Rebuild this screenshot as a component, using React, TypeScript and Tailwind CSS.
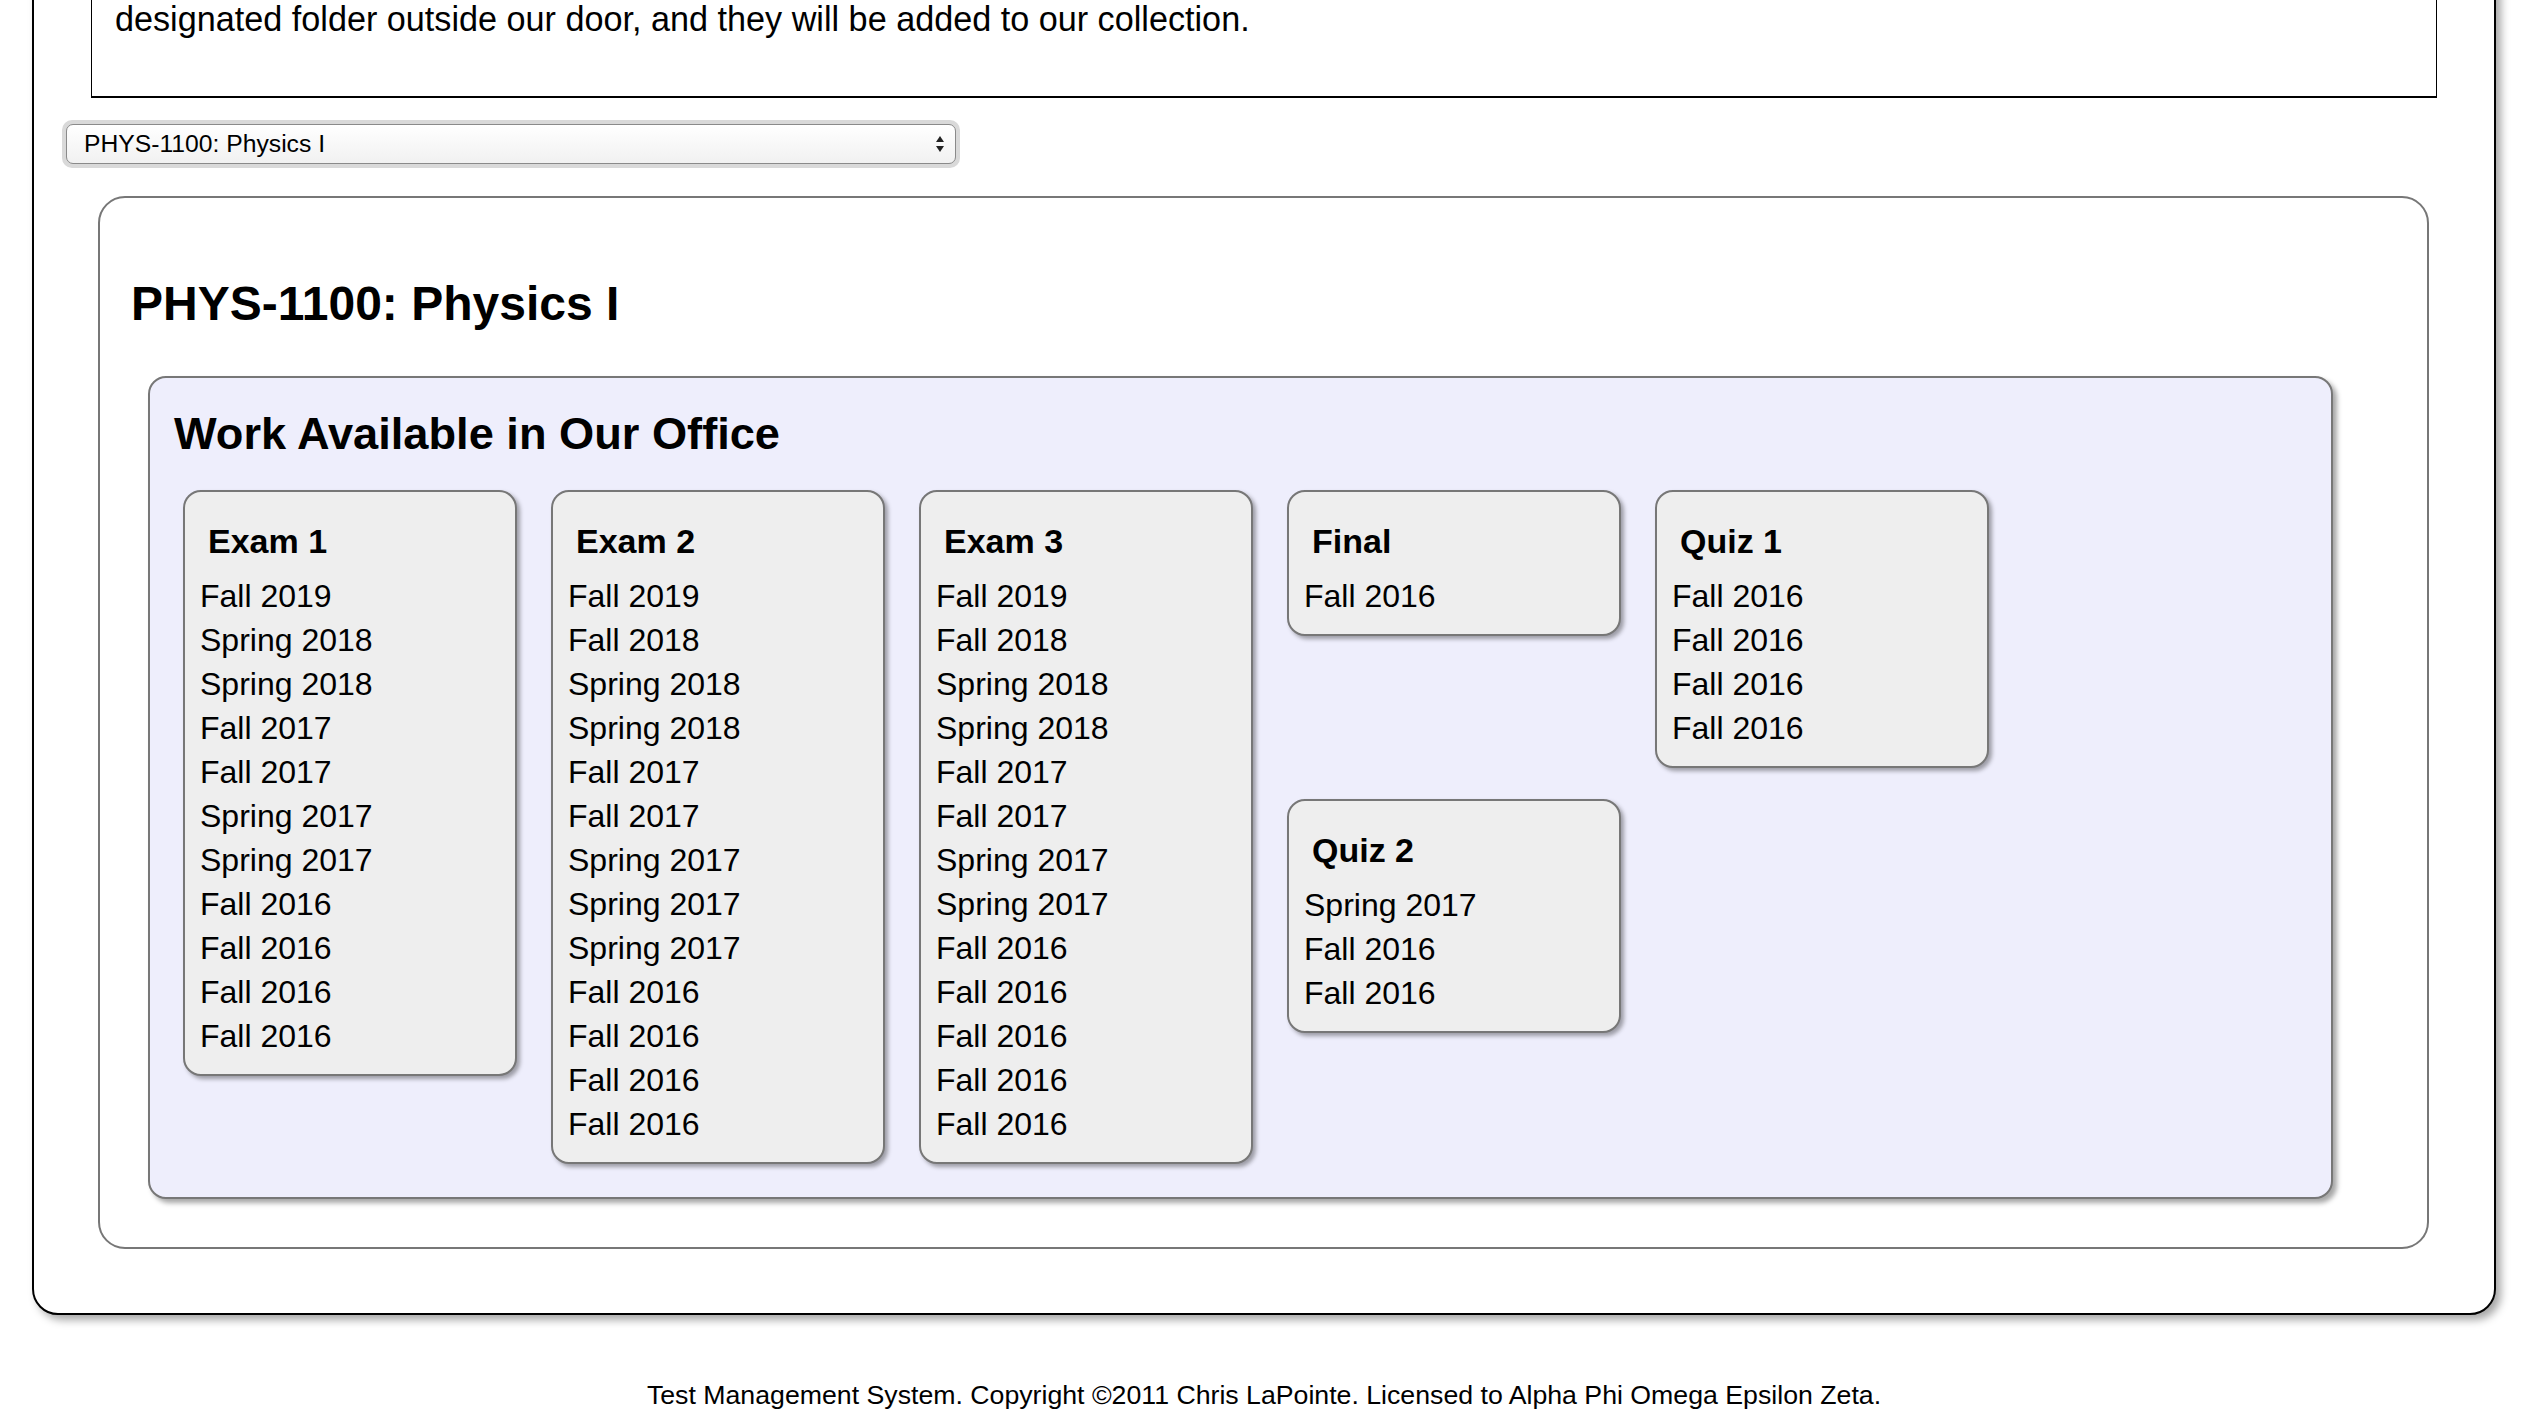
import React from "react";

type Card = { title: string; items: string[] };

const cards: Card[] = [
  {
    title: "Exam 1",
    items: ["Fall 2019", "Spring 2018", "Spring 2018", "Fall 2017", "Fall 2017", "Spring 2017", "Spring 2017", "Fall 2016", "Fall 2016", "Fall 2016", "Fall 2016"],
  },
  {
    title: "Exam 2",
    items: ["Fall 2019", "Fall 2018", "Spring 2018", "Spring 2018", "Fall 2017", "Fall 2017", "Spring 2017", "Spring 2017", "Spring 2017", "Fall 2016", "Fall 2016", "Fall 2016", "Fall 2016"],
  },
  {
    title: "Exam 3",
    items: ["Fall 2019", "Fall 2018", "Spring 2018", "Spring 2018", "Fall 2017", "Fall 2017", "Spring 2017", "Spring 2017", "Fall 2016", "Fall 2016", "Fall 2016", "Fall 2016", "Fall 2016"],
  },
  { title: "Final", items: ["Fall 2016"] },
  { title: "Quiz 1", items: ["Fall 2016", "Fall 2016", "Fall 2016", "Fall 2016"] },
  { title: "Quiz 2", items: ["Spring 2017", "Fall 2016", "Fall 2016"] },
];

function WorkCard({ card }: { card: Card }) {
  return (
    <div className="float-left w-[334px] mr-[34px] mb-[31px] bg-[#eeeeee] border-2 border-[#777777] rounded-[18px] shadow-[3px_3px_4px_rgba(0,0,0,0.35)] pt-[30px] pb-[16px]">
      <div className="pl-[23px] text-[34px] leading-[39px] font-bold mb-[13px]">{card.title}</div>
      <div className="pl-[15px] text-[32px] leading-[44px]">
        {card.items.map((it, i) => (
          <div key={i}>{it}</div>
        ))}
      </div>
    </div>
  );
}

export default function App() {
  return (
    <div className="bg-white h-[1410px] overflow-hidden text-black font-['Liberation_Sans',Arial,sans-serif]">
      <div className="ml-[32px] w-[2464px] mt-[-100px] border-2 border-black rounded-b-[26px] shadow-[5px_5px_8px_rgba(0,0,0,0.35)] bg-white pb-[64px] pt-[18px]">
        <div className="mx-[57px] border border-black border-b-2 pl-[23px] pt-[78px] pb-[57px] text-[34.2px] leading-[40px]">
          designated folder outside our door, and they will be added to our collection.
        </div>

        <div className="ml-[28px] mt-[22px] w-[898px] h-[48px] rounded-[10px] bg-[#d9d9d9] p-[4px]">
          <div className="h-full rounded-[7px] border border-[#8a8a8a] bg-gradient-to-b from-white to-[#f1f1f1] flex items-center justify-between pl-[17px] pr-[10px] text-[24.7px]">
            <span>PHYS-1100: Physics I</span>
            <svg width="10" height="20" viewBox="0 0 10 20">
              <polygon points="5,2 9,8 1,8" fill="#222" />
              <polygon points="1,12 9,12 5,18" fill="#222" />
            </svg>
          </div>
        </div>

        <div className="ml-[64px] mr-[65px] mt-[28px] border-2 border-[#777777] rounded-[27px] pt-[78px] pb-[48px]">
          <h2 className="pl-[31px] text-[48px] leading-[56px] font-bold mb-[44px]">PHYS-1100: Physics I</h2>
          <div className="ml-[48px] w-[2185px] bg-[#eeeefc] border-2 border-[#777777] rounded-[18px] shadow-[4px_4px_5px_rgba(0,0,0,0.35)] pt-[31px] pb-[2px]">
            <h3 className="pl-[24px] text-[45.2px] leading-[50px] font-bold mb-[31px]">Work Available in Our Office</h3>
            <div className="pl-[33px] flow-root">
              {cards.map((c, i) => (
                <WorkCard key={i} card={c} />
              ))}
            </div>
          </div>
        </div>
      </div>
      <div className="ml-[32px] w-[2464px] mt-[65px] text-center text-[26.7px] leading-[30px]">
        Test Management System. Copyright ©2011 Chris LaPointe. Licensed to Alpha Phi Omega Epsilon Zeta.
      </div>
    </div>
  );
}
